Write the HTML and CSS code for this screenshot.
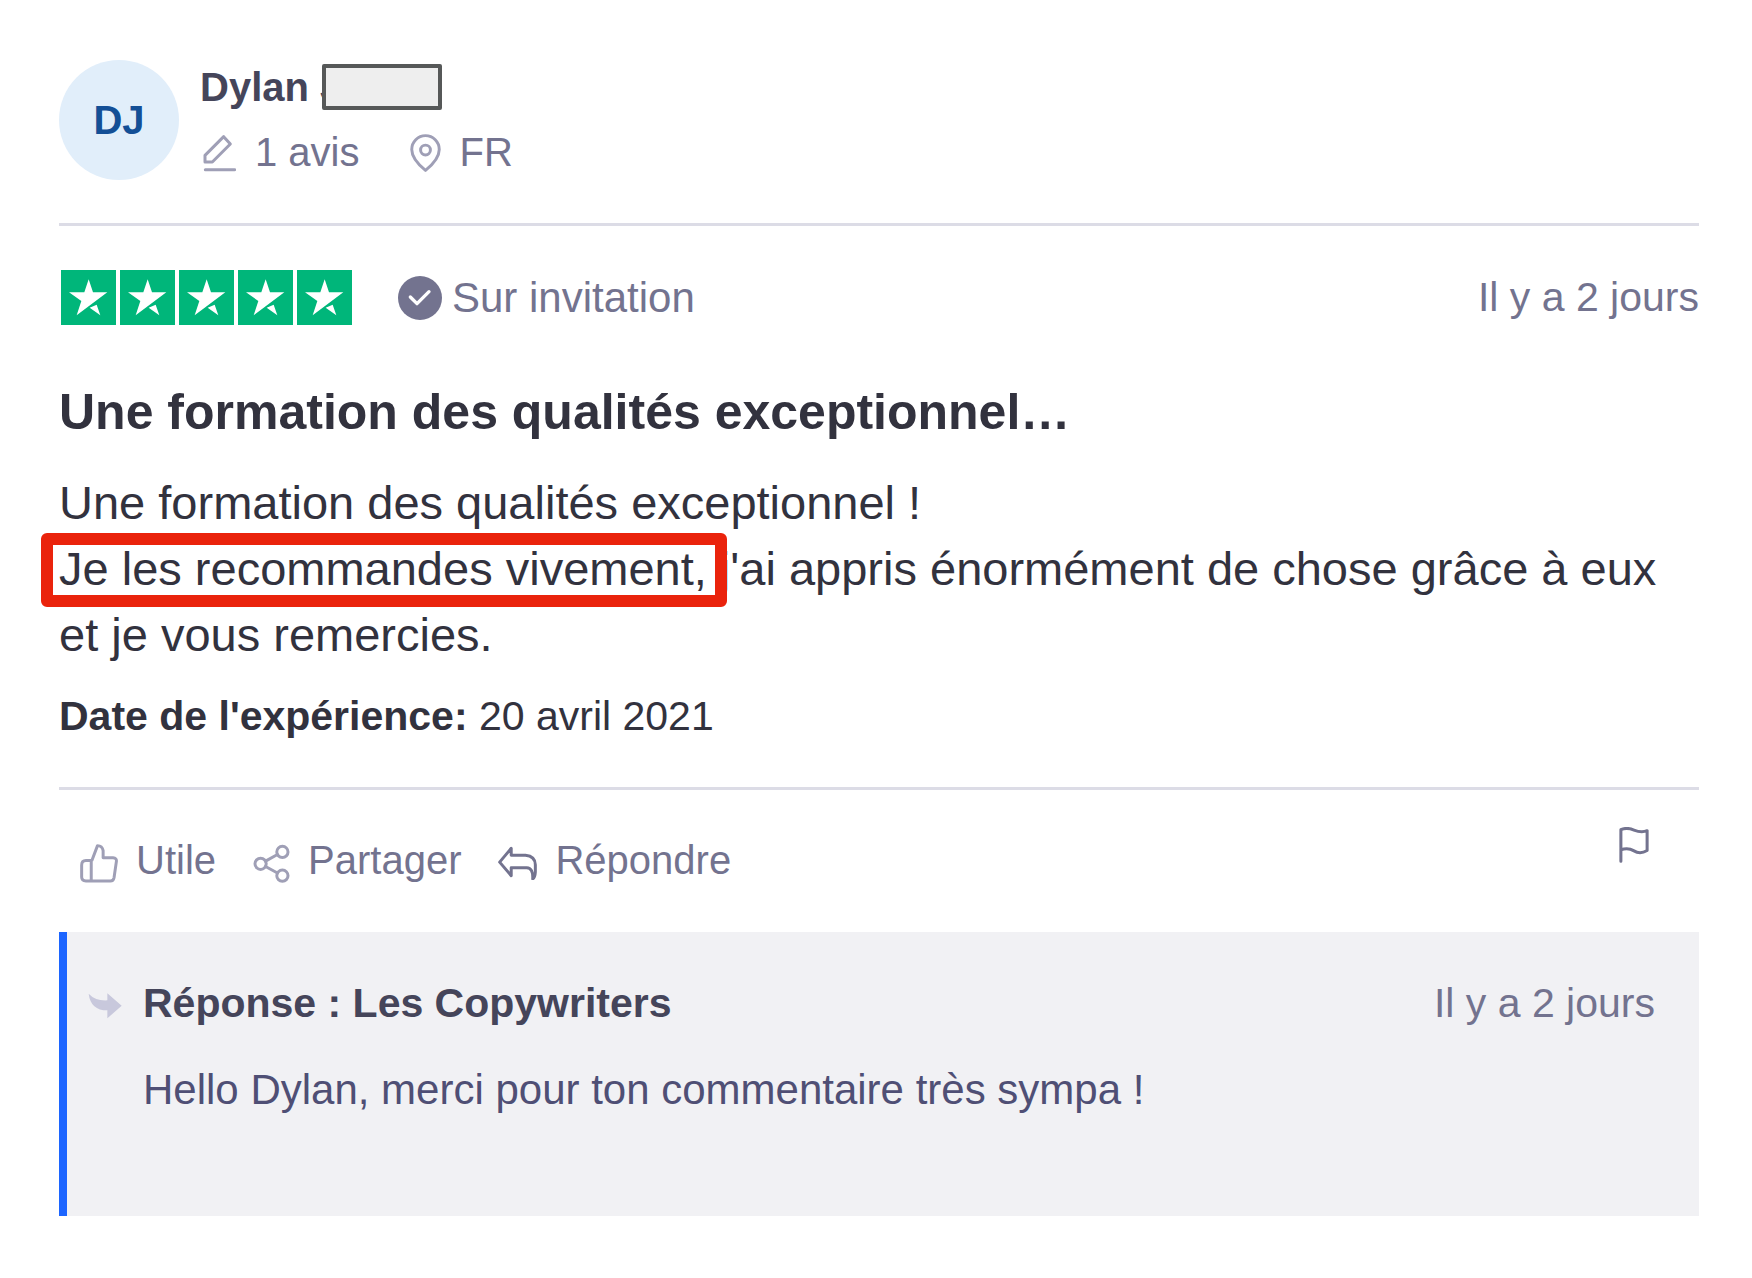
FILE: index.html
```html
<!DOCTYPE html>
<html lang="fr">
<head>
<meta charset="utf-8">
<meta name="viewport" content="width=device-width, initial-scale=1">
<title>Avis de Dylan</title>
<link rel="stylesheet" href="styles.css">
</head>
<body>
<svg class="sprite" aria-hidden="true">
  <symbol id="star" viewBox="0 0 165 165">
    <rect width="165" height="165" fill="#00b67a"/>
    <path fill="#fff" d="M83 28 96 67H139L47 136 61 93 24 67H70ZM86 113 107 104 118 136Z"/>
  </symbol>
</svg>
<article class="review">
  <header class="author">
    <div class="avatar">DJ</div>
    <div class="identity">
      <div class="name">Dylan <span class="surname">J</span></div>
      <div class="facts">
        <span class="fact">
          <svg class="icon pale" width="36" height="38" viewBox="-9 0 108 114"><path d="M62 8 82 30 28 84H6V64Z"/><path d="M7 107H95"/></svg>
          1 avis
        </span>
        <span class="fact">
          <svg class="icon pale" width="31" height="38" viewBox="0 0 94 116"><path d="M47 111C30 97 5 74 5 47A42 42 0 0 1 89 47C89 74 64 97 47 111Z"/><circle cx="47" cy="49" r="15"/></svg>
          FR
        </span>
      </div>
    </div>
  </header>

  <div class="rating">
    <div class="stars" role="img" aria-label="5 étoiles sur 5">
      <svg class="star"><use href="#star"/></svg>
      <svg class="star"><use href="#star"/></svg>
      <svg class="star"><use href="#star"/></svg>
      <svg class="star"><use href="#star"/></svg>
      <svg class="star"><use href="#star"/></svg>
    </div>
    <div class="invited">
      <svg width="44" height="44" viewBox="0 0 132 132"><circle cx="66" cy="66" r="66" fill="#73738f"/><path d="M37 63 57 83 93 47" fill="none" stroke="#fff" stroke-width="10" stroke-linecap="round" stroke-linejoin="round"/></svg>
      Sur invitation
    </div>
    <time class="date">Il y a 2 jours</time>
  </div>

  <h2 class="title">Une formation des qualités exceptionnel…</h2>
  <p class="text">Une formation des qualités exceptionnel !<br>
    <span class="marked">Je les recommandes vivement, j</span>'ai appris énormément de chose grâce à eux<br>
    et je vous remercies.</p>
  <p class="experience"><strong>Date de l'expérience:</strong> 20 avril 2021</p>

  <div class="actions">
    <button class="action" type="button">
      <svg class="icon pale" width="38" height="45" viewBox="0 -18 115 136"><path d="M36 50 53 5Q67 5 70 20V42H100Q112 42 110 54L103 102Q101 112 92 112H18Q5 112 5 100V64Q5 50 18 50ZM34 50V112"/></svg>
      Utile
    </button>
    <button class="action" type="button">
      <svg class="icon pale" width="37" height="45" viewBox="0 -18 112 136"><circle cx="23" cy="60" r="17"/><circle cx="89" cy="24" r="17"/><circle cx="89" cy="96" r="17"/><path d="M38 52 74 32M38 68 74 88"/></svg>
      Partager
    </button>
    <button class="action" type="button">
      <svg class="icon" width="39" height="39" viewBox="0 -16 116 118"><path d="M4 48 39 6V27H82Q112 30 112 56V78Q111 94 104 99Q106 66 86 65H39V89Z"/></svg>
      Répondre
    </button>
    <button class="flag" type="button" aria-label="Signaler">
      <svg class="icon" width="30" height="36" viewBox="0 0 88 107"><path d="M5 102V8Q22 0 44 9T83 11V70Q62 82 44 71T5 68"/></svg>
    </button>
  </div>

  <section class="reply">
    <svg class="arrow" width="34" height="60" viewBox="0 -60 102 180"><path fill="#c8c8dc" d="M2 2Q22 24 58 22V1L101 38 58 76V52Q8 52 2 2Z"/></svg>
    <div class="reply-main">
      <div class="reply-head">
        <h3 class="reply-title">Réponse : Les Copywriters</h3>
        <time class="date">Il y a 2 jours</time>
      </div>
      <p class="reply-text">Hello Dylan, merci pour ton commentaire très sympa !</p>
    </div>
  </section>
</article>
</body>
</html>
```
FILE: styles.css
```css
*,
*::after {
  box-sizing: border-box;
}

body {
  margin: 0;
  background: #fff;
  color: #32323e;
  font-family: "Liberation Sans", Arial, sans-serif;
}

h2, h3, p {
  margin: 0;
}

svg {
  display: block;
  flex: none;
}

button {
  padding: 0;
  border: 0;
  background: none;
  color: inherit;
  font: inherit;
  cursor: pointer;
}

.sprite {
  position: absolute;
  width: 0;
  height: 0;
}

.icon {
  fill: none;
  stroke: #73738f;
  stroke-width: 9;
  stroke-linecap: round;
  stroke-linejoin: round;
}

.pale {
  stroke: #9f9fb6;
}

.review {
  padding: 55px 53px 62px 59px;
}

.author {
  display: flex;
  align-items: center;
  gap: 21px;
  padding-bottom: 38px;
  border-bottom: 3px solid #dcdce6;
  font-size: 40px;
  line-height: 65px;
}

.avatar {
  width: 120px;
  height: 120px;
  border-radius: 50%;
  background: #e1eefa;
  color: #134f96;
  font-weight: bold;
  line-height: 120px;
  text-align: center;
}

.name {
  color: #45455a;
  font-weight: bold;
}

.surname {
  display: inline-block;
  position: relative;
}

.surname::after {
  content: "";
  position: absolute;
  top: 9px;
  left: 2px;
  width: 120px;
  height: 46px;
  border: 4px solid #565858;
  border-radius: 2px;
  background: #eee;
}

.facts {
  display: flex;
  gap: 50px;
  color: #73738f;
}

.fact {
  display: flex;
  align-items: center;
  gap: 19px;
}

.rating {
  display: flex;
  align-items: center;
  padding-top: 44px;
  color: #73738f;
  font-size: 42px;
  line-height: 55px;
}

.stars {
  display: flex;
  gap: 4px;
  padding-left: 2px;
}

.star {
  width: 55px;
  height: 55px;
}

.invited {
  display: flex;
  align-items: center;
  gap: 10px;
  margin-left: 46px;
}

.date {
  margin-left: auto;
  color: #73738f;
  font-size: 41px;
}

.title {
  margin-top: 55px;
  font-size: 50px;
  line-height: 64px;
}

.text {
  margin-top: 26px;
  font-size: 47px;
  line-height: 66px;
}

.marked {
  position: relative;
}

.marked::after {
  content: "";
  position: absolute;
  inset: -9px 3px -12px -18px;
  border: 12px solid #ea230c;
  border-radius: 6px;
}

.experience {
  margin-top: 18px;
  font-size: 41px;
  line-height: 60px;
}

.actions {
  display: flex;
  align-items: flex-start;
  gap: 37px;
  margin-top: 41px;
  padding: 37px 50px 39px 21px;
  border-top: 3px solid #dcdce6;
  color: #73738f;
  font-size: 40px;
  line-height: 66px;
}

.action {
  display: flex;
  align-items: center;
  gap: 18px;
}

.flag {
  margin-left: auto;
}

.reply {
  display: flex;
  gap: 21px;
  padding: 41px 44px 96px 21px;
  border-left: 8px solid #1c65ff;
  background: #f1f1f4;
  font-size: 42px;
  line-height: 60px;
}

.reply-main {
  flex: 1;
}

.reply-head {
  display: flex;
}

.reply-title {
  color: #45455a;
  font-size: 41px;
}

.reply-text {
  margin-top: 27px;
  color: #4f4f75;
}
```
